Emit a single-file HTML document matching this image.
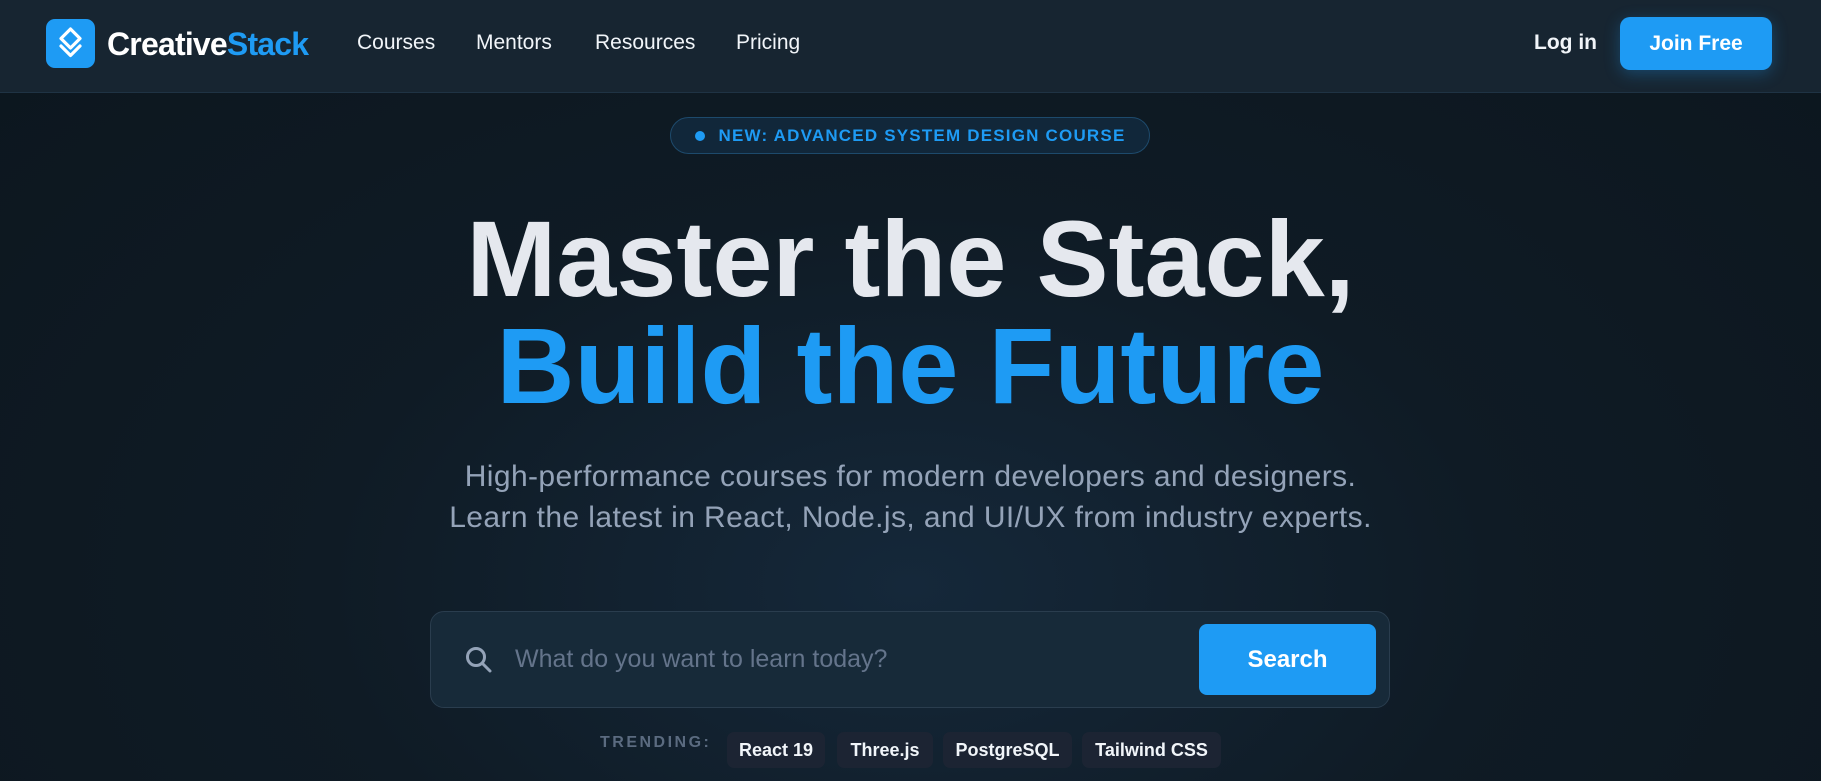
<!DOCTYPE html>
<html><head><meta charset="utf-8"><style>
*{margin:0;padding:0;box-sizing:border-box}
body{width:1821px;height:781px;overflow:hidden;font-family:"Liberation Sans",sans-serif;background:radial-gradient(ellipse at 50% 75%,#15283a 0%,#0f1b25 45%,#0c161e 100%);position:relative;color:#fff}
.nav{position:absolute;left:0;top:0;width:1821px;height:93px;background:#172531;border-bottom:1px solid #1f3344}
.abs{position:absolute}
.logo{left:46px;top:19px;width:49px;height:49px;background:#1e9bf4;border-radius:9px}
.brand{left:107px;top:26px;font-size:32px;font-weight:700;letter-spacing:-0.8px}
.nl{top:31px;font-size:21px;color:#f1f5f9}
.join{left:1620px;top:17px;width:152px;height:53px;background:#1e9bf4;border-radius:10px;font-size:21px;font-weight:700;display:flex;align-items:center;justify-content:center;box-shadow:0 4px 16px rgba(30,155,244,.3)}
.badge{left:670px;top:117px;width:480px;height:37px;border:1px solid #1d4a6c;background:#11273a;border-radius:19px;color:#1e9bf4;font-size:17px;font-weight:700;letter-spacing:1.2px;display:flex;align-items:center;justify-content:center}
.badge i{width:10px;height:10px;border-radius:50%;background:#1e9bf4;margin-right:14px;display:inline-block}
.h{left:0;width:1821px;text-align:center;font-weight:700;font-size:108px;letter-spacing:0px;line-height:1}
.sub{left:0;width:1821px;text-align:center;font-size:30px;letter-spacing:0.4px;color:#94a3b8;line-height:41px}
.search{left:430px;top:611px;width:960px;height:97px;border:1px solid #2a3d4e;border-radius:14px;background:#172a39}
.btn{left:1199px;top:624px;width:177px;height:71px;background:#1e9bf4;border-radius:8px;font-size:24px;font-weight:700;display:flex;align-items:center;justify-content:center}
.chip{top:732px;height:36px;background:#1c2433;border-radius:7px;font-size:18px;font-weight:700;color:#f1f5f9;display:flex;align-items:center;justify-content:center}
</style></head><body>
<div class="nav"></div>
<div class="abs logo"><svg width="49" height="49" viewBox="0 0 49 49"><path d="M24.5 10 L34 19.5 L24.5 29 L15 19.5 Z" fill="none" stroke="#fff" stroke-width="3.2" stroke-linejoin="round"/><path d="M15 27 L24.5 36.5 L34 27" fill="none" stroke="#fff" stroke-width="3.2" stroke-linejoin="round" stroke-linecap="round"/></svg></div>
<div class="abs brand">Creative<span style="color:#1e9bf4">Stack</span></div>
<div class="abs nl" style="left:357px">Courses</div>
<div class="abs nl" style="left:476px">Mentors</div>
<div class="abs nl" style="left:595px">Resources</div>
<div class="abs nl" style="left:736px">Pricing</div>
<div class="abs nl" style="left:1534px;font-weight:700">Log in</div>
<div class="abs join">Join Free</div>
<div class="abs badge"><i></i>NEW: ADVANCED SYSTEM DESIGN COURSE</div>
<div class="abs h" style="top:205px;color:#e5e8ee">Master the Stack,</div>
<div class="abs h" style="top:312px;color:#1e9bf4">Build the Future</div>
<div class="abs sub" style="top:456px">High-performance courses for modern developers and designers.<br>Learn the latest in React, Node.js, and UI/UX from industry experts.</div>
<div class="abs search"></div>
<svg class="abs" style="left:463px;top:644px" width="32" height="32" viewBox="0 0 32 32"><circle cx="13" cy="13" r="8.5" fill="none" stroke="#94a3b8" stroke-width="3"/><path d="M19.5 19.5 L27 27" stroke="#94a3b8" stroke-width="3" stroke-linecap="round"/></svg>
<div class="abs" style="left:515px;top:645px;font-size:25px;color:#64748b">What do you want to learn today?</div>
<div class="abs btn">Search</div>
<div class="abs" style="left:600px;top:734px;font-size:16px;font-weight:700;letter-spacing:2.5px;color:#5b6b80">TRENDING:</div>
<div class="abs chip" style="left:727px;width:98px">React 19</div>
<div class="abs chip" style="left:837px;width:96px">Three.js</div>
<div class="abs chip" style="left:943px;width:129px">PostgreSQL</div>
<div class="abs chip" style="left:1082px;width:139px">Tailwind CSS</div>
</body></html>
